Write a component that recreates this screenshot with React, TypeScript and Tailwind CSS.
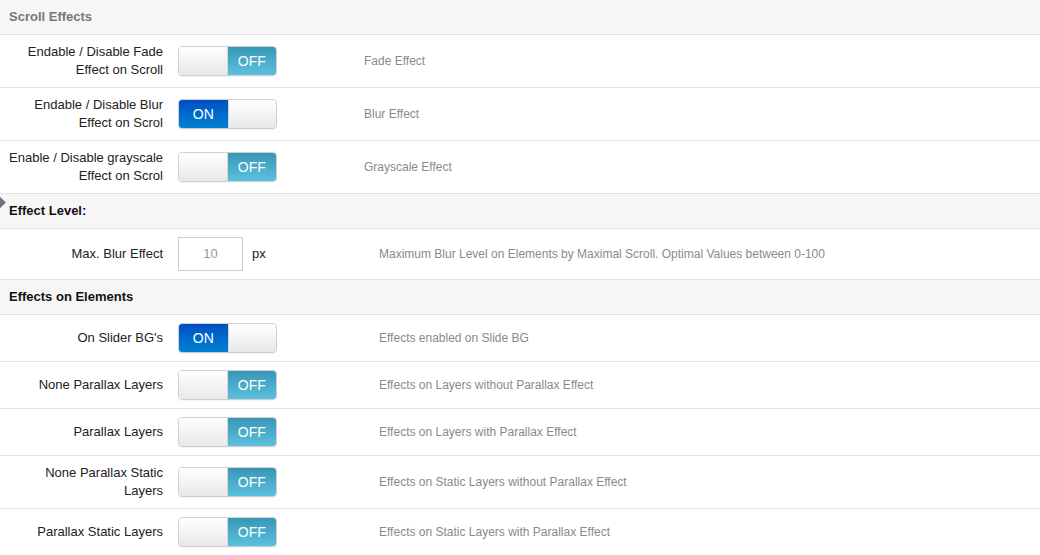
import React from 'react';

type Row = { label: React.ReactNode; on?: boolean; desc: string };

const Toggle = ({ on }: { on?: boolean }) => (
  <div className="flex h-[30px] w-[99px] overflow-hidden rounded-[4px] border border-[#cfcfcf] text-[14px] text-white shadow-[0_1px_1px_rgba(0,0,0,0.05)]">
    {on ? (
      <>
        <div className="flex w-1/2 items-center justify-center bg-gradient-to-b from-[#004fc4] to-[#0081d2]">ON</div>
        <div className="w-1/2 border-l border-[#d8d8d8] bg-gradient-to-b from-white to-[#e8e8e8]" />
      </>
    ) : (
      <>
        <div className="w-1/2 border-r border-[#d8d8d8] bg-gradient-to-b from-white to-[#e8e8e8]" />
        <div className="flex w-1/2 items-center justify-center bg-gradient-to-b from-[#3897b6] to-[#5bc0de]">OFF</div>
      </>
    )}
  </div>
);

const Header = ({ title, muted, marker }: { title: string; muted?: boolean; marker?: boolean }) => (
  <div className="relative flex h-[35px] items-center border-b border-[#e3e3e3] bg-[#f6f6f6] px-[9px]">
    {marker && <div className="absolute left-[-5px] top-[4px] h-[9px] w-[9px] rotate-45 bg-[#6b7280]" />}
    <span className={`text-[13px] font-bold ${muted ? 'text-[#777]' : 'text-[#111]'}`}>{title}</span>
  </div>
);

const SettingRow = ({ row, ctrlW, children }: { row: Row; ctrlW: string; children?: React.ReactNode }) => (
  <div className="flex items-center border-b border-[#e3e3e3] py-2">
    <div className="w-[171px] shrink-0 pl-1 pr-[8px] text-right text-[13px] leading-[18px] text-[#222]">{row.label}</div>
    <div className={`${ctrlW} flex shrink-0 items-center pl-[7px]`}>{children ?? <Toggle on={row.on} />}</div>
    <div className="text-[12px] text-[#8a8a8a]">{row.desc}</div>
  </div>
);

const scroll: Row[] = [
  { label: <>Endable / Disable Fade<br />Effect on Scroll</>, desc: 'Fade Effect' },
  { label: <>Endable / Disable Blur<br />Effect on Scrol</>, on: true, desc: 'Blur Effect' },
  { label: <>Enable / Disable grayscale<br />Effect on Scrol</>, desc: 'Grayscale Effect' },
];

const elements: Row[] = [
  { label: "On Slider BG's", on: true, desc: 'Effects enabled on Slide BG' },
  { label: 'None Parallax Layers', desc: 'Effects on Layers without Parallax Effect' },
  { label: 'Parallax Layers', desc: 'Effects on Layers with Parallax Effect' },
  { label: <>None Parallax Static<br />Layers</>, desc: 'Effects on Static Layers without Parallax Effect' },
  { label: 'Parallax Static Layers', desc: 'Effects on Static Layers with Parallax Effect' },
];

export default function App() {
  return (
    <div className="h-[555px] w-[1040px] overflow-hidden bg-white font-['Liberation_Sans',Arial,sans-serif]">
      <Header title="Scroll Effects" muted />
      {scroll.map((r, i) => (
        <SettingRow key={i} row={r} ctrlW="w-[193px]" />
      ))}
      <Header title="Effect Level:" marker />
      <SettingRow row={{ label: 'Max. Blur Effect', desc: 'Maximum Blur Level on Elements by Maximal Scroll. Optimal Values between 0-100' }} ctrlW="w-[208px]">
        <div className="flex h-[34px] w-[65px] items-center justify-center border border-[#cccccc] text-[13px] text-[#999]">10</div>
        <span className="ml-[9px] text-[13px] text-[#222]">px</span>
      </SettingRow>
      <Header title="Effects on Elements" />
      {elements.map((r, i) => (
        <SettingRow key={i} row={r} ctrlW="w-[208px]" />
      ))}
    </div>
  );
}
